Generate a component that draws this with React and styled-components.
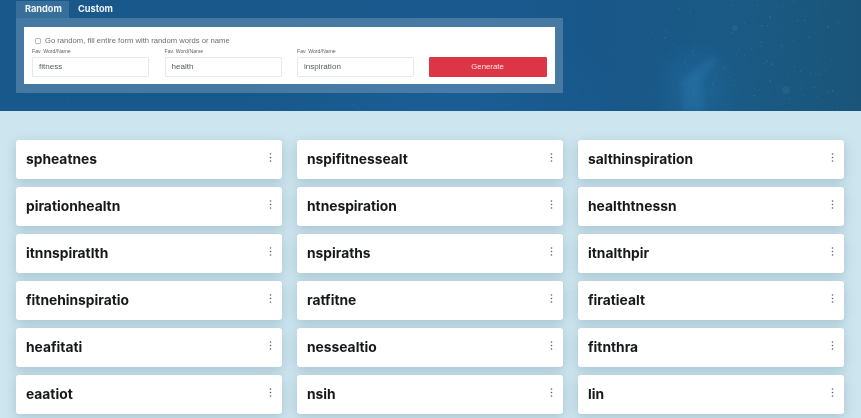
import React from "react";
import styled, { createGlobalStyle } from "styled-components";

const Global = createGlobalStyle`
  html, body { margin: 0; padding: 0; background: #cde5ef; overflow: hidden; }
  * { box-sizing: border-box; }
`;
const Page = styled.div`
  width: 861px; height: 418px; overflow: hidden; background: #cde5ef;
  font-family: "Liberation Sans", Arial, sans-serif;
  filter: blur(.35px);
`;
const Hero = styled.header`
  position: relative; height: 111px; padding: 1px 16px 0; overflow: hidden;
  background:
    radial-gradient(ellipse 45px 50px at 695px 88px, rgba(40,125,185,.3), transparent),
    radial-gradient(ellipse 200px 90px at 440px 115px, rgba(35,105,175,.25), transparent),
    linear-gradient(90deg, #18588a 0%, #18588a 30%, #19598e 55%, #185788 70%, #1a5a85 85%, #1a5579 100%);
`;
const Stars = styled.svg`
  position: absolute; inset: 0; width: 861px; height: 111px;
`;
const HeroInner = styled.div`
  position: relative; width: 547px;
`;
const Tabs = styled.nav`
  display: flex; height: 17px;
`;
const Tab = styled.div`
  width: ${p => p.$w}px; padding-left: 9px; font: bold 9.2px/13px Inter, "Liberation Sans", sans-serif;
  padding-top: 1px;
  color: #eef4f8;
  background: ${p => p.$active ? "rgba(255,255,255,.14)" : "transparent"};
`;
const Panel = styled.div`
  padding: 9px 8px; background: rgba(255,255,255,.2); border-radius: 1px;
`;
const Form = styled.div`
  height: 57px; background: #fff; padding: 9px 8px 0;
`;
const CheckRow = styled.label`
  display: flex; align-items: center; gap: 4px; height: 10px;
  font-size: 7.65px; line-height: 10px; color: #6a6f74;
`;
const Box = styled.span`
  width: 6px; height: 6px; margin-left: 3px; border: 1px solid #b9bcbf; border-radius: 1px; background: #fff;
`;
const Fields = styled.div`
  display: grid; grid-template-columns: repeat(4, 117px); column-gap: 15.5px; margin-top: 2px; align-items: end;
`;
const Field = styled.div`
  display: flex; flex-direction: column; gap: 2px;
`;
const Small = styled.span`
  font-size: 5.2px; line-height: 6px; height: 7px; color: #5f6368;
`;
const Input = styled.div`
  height: 20px; border: 1px solid #e6e9ec; border-radius: 1px; padding-left: 6px;
  font-size: 8.1px; line-height: 18px; color: #565c61; background: #fff;
`;
const Button = styled.div`
  height: 20px; margin-left: -1px; background: #dc3545; color: #fbe8ea; border-radius: 1px;
  font-size: 7.8px; line-height: 20px; text-align: center;
`;
const Grid = styled.main`
  display: grid; grid-template-columns: repeat(3, 266px); column-gap: 15px; row-gap: 8.3px;
  padding: 29px 0 0 16px;
`;
const Card = styled.article`
  height: 38.7px; background: #fff; border-radius: 3px; padding: 0 10px 0 10px;
  display: flex; justify-content: space-between; align-items: flex-start;
  box-shadow: 0 3px 12px rgba(70,110,130,.28);
`;
const Name = styled.span`
  font: 700 13.8px/38px Inter, "Liberation Sans", sans-serif; color: #16181b;
`;
const Dots = styled.svg`
  width: 3px; height: 9px; margin-top: 13px; fill: #5a5e62;
`;

const names = ["spheatnes","nspifitnessealt","salthinspiration","pirationhealtn","htnespiration","healthtnessn","itnnspiratlth","nspiraths","itnalthpir","fitnehinspiratio","ratfitne","firatiealt","heafitati","nessealtio","fitnthra","eaatiot","nsih","lin"];

let seed = 7;
const rnd = () => (seed = (seed * 16807) % 2147483647) / 2147483647;
const stars = Array.from({ length: 260 }, () => {
  const right = rnd() < 0.75;
  return {
    x: right ? 650 + rnd() * 190 : rnd() * 650,
    y: rnd() * 111,
    r: 0.3 + rnd() * (right ? 0.6 : 0.4),
    o: (right ? 0.08 : 0.04) + rnd() * 0.14,
  };
});

export default function App() {
  return (
    <Page>
      <Global />
      <Hero>
        <Stars viewBox="0 0 861 111" aria-hidden="true">
          <defs><filter id="soft"><feGaussianBlur stdDeviation="3" /></filter></defs>
          {stars.map((s, i) => <circle key={i} cx={s.x} cy={s.y} r={s.r} fill="#7fb8e6" opacity={s.o} />)}
          <path d="M682 80 L713 55 L718 60 L700 82 L705 111 L683 111Z" fill="#3b8cc8" opacity=".2" filter="url(#soft)" />
          <circle cx="786" cy="90" r="4" fill="#6fb0e0" opacity=".1" />
          <circle cx="735" cy="28" r="3" fill="#6fb0e0" opacity=".1" />
        </Stars>
        <HeroInner>
          <Tabs>
            <Tab $active $w={53}>Random</Tab>
            <Tab $w={60}>Custom</Tab>
          </Tabs>
          <Panel>
            <Form>
              <CheckRow><Box />Go random, fill entire form with random words or name</CheckRow>
              <Fields>
                {["fitness","health","inspiration"].map(v => (
                  <Field key={v}>
                    <Small>Fav. Word/Name</Small>
                    <Input>{v}</Input>
                  </Field>
                ))}
                <Button>Generate</Button>
              </Fields>
            </Form>
          </Panel>
        </HeroInner>
      </Hero>
      <Grid>
        {names.map(n => (
          <Card key={n}>
            <Name>{n}</Name>
            <Dots viewBox="0 0 3 9"><circle cx="1.5" cy="1" r=".8"/><circle cx="1.5" cy="4.5" r=".8"/><circle cx="1.5" cy="8" r=".8"/></Dots>
          </Card>
        ))}
      </Grid>
    </Page>
  );
}
